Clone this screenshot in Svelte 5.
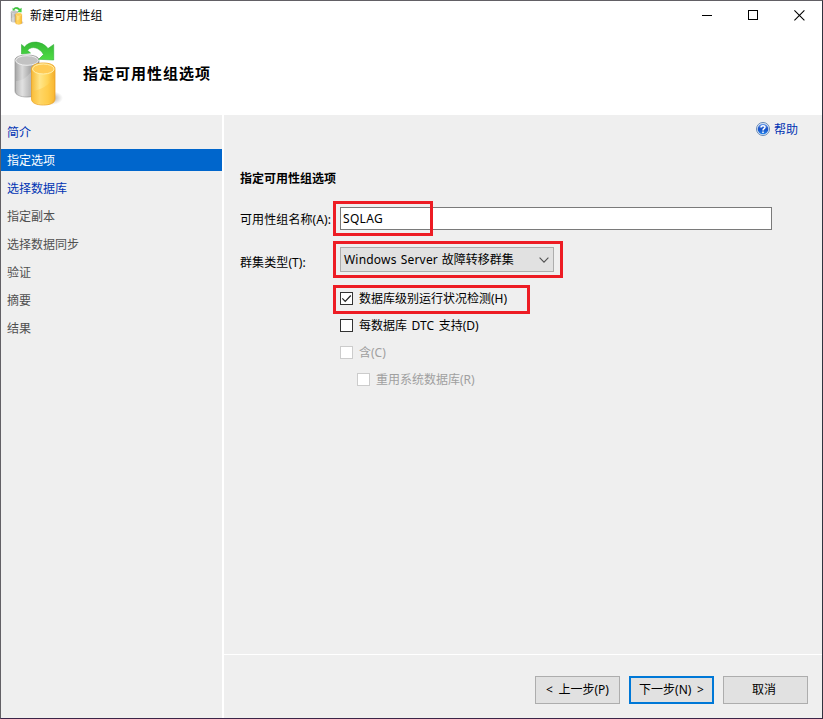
<script lang="ts">
  type Step = { label: string; state: 'link' | 'active' | 'pending' };

  const steps: Step[] = [
    { label: '简介', state: 'link' },
    { label: '指定选项', state: 'active' },
    { label: '选择数据库', state: 'link' },
    { label: '指定副本', state: 'pending' },
    { label: '选择数据同步', state: 'pending' },
    { label: '验证', state: 'pending' },
    { label: '摘要', state: 'pending' },
    { label: '结果', state: 'pending' }
  ];

  let groupName = $state('SQLAG');
  let options = $state([
    { label: '数据库级别运行状况检测(H)', checked: true, disabled: false, nested: false, marked: true },
    { label: '每数据库 DTC 支持(D)', checked: false, disabled: false, nested: false, marked: false },
    { label: '含(C)', checked: false, disabled: true, nested: false, marked: false },
    { label: '重用系统数据库(R)', checked: false, disabled: true, nested: true, marked: false }
  ]);

  function toggle(i: number) {
    if (!options[i].disabled) options[i].checked = !options[i].checked;
  }
</script>

{#snippet databases(size: string)}
  <svg class="db {size}" viewBox="0 0 50 66" aria-hidden="true">
    <defs>
      <linearGradient id="silver-{size}">
        <stop offset="0" stop-color="#a3a3a3" />
        <stop offset="0.3" stop-color="#dadada" />
        <stop offset="0.6" stop-color="#adadad" />
        <stop offset="1" stop-color="#8a8a8a" />
      </linearGradient>
      <linearGradient id="gold-{size}">
        <stop offset="0" stop-color="#f6b935" />
        <stop offset="0.35" stop-color="#ffe68a" />
        <stop offset="0.7" stop-color="#ffd356" />
        <stop offset="1" stop-color="#f2ac2a" />
      </linearGradient>
      <linearGradient id="green-{size}" x2="0" y2="1">
        <stop offset="0" stop-color="#35b936" />
        <stop offset="1" stop-color="#4fdc44" />
      </linearGradient>
      <radialGradient id="shade-{size}">
        <stop offset="0" stop-color="#777" stop-opacity="0.75" />
        <stop offset="1" stop-color="#999" stop-opacity="0" />
      </radialGradient>
    </defs>
    <ellipse cx="37" cy="57" rx="12" ry="7" fill="url(#shade-{size})" />
    <path d="M1 19v31c0 4 6 6 12 6s12-2 12-6V19c0-3-5-5-12-5S1 16 1 19z" fill="url(#silver-{size})" stroke="#969696" stroke-width=".7" />
    <ellipse cx="13" cy="19.500" rx="11.300" ry="4.800" fill="#c2c2c2" stroke="#f0f0f0" />
    <path d="M2 40c6 0 11-4 15-9v24c-8 2-15 0-15-5z" fill="#fff" opacity=".2" />
    <path d="M17.500 28v30c0 4 5 6 11.800 6s11.700-2 11.700-6V28c0-4-5-6-11.700-6s-11.800 2-11.800 6z" fill="url(#gold-{size})" stroke="#eda62a" stroke-width=".8" />
    <ellipse cx="29.300" cy="28" rx="10.800" ry="5" fill="#ffcb55" stroke="#fff0ac" />
    <path d="M18.500 50c9-1 16-6 21.500-13v21c-3 6-18 7-21.500 1z" fill="#ffc33c" opacity=".45" />
    <path d="M7.500 3.500l3 2.500C16-1 28-.5 34 7.500l5.700-4V19l-15-.7 4.800-4.800C26 7 18 4 13.500 9.300l3 2.700-9 1z" fill="url(#green-{size})" stroke="#2fb035" stroke-width=".6" />
  </svg>
{/snippet}

<div class="window" lang="zh-CN">
  <header class="titlebar">
    {@render databases('small')}
    <span class="caption">新建可用性组</span>
    <div class="controls">
      <svg viewBox="0 0 11 11"><path d="M0 5.500h10" /></svg>
      <svg viewBox="0 0 11 11"><path d="M.5 .5h9v9h-9z" /></svg>
      <svg class="close" viewBox="0 0 11 11"><path d="M.4 .4l10 10M10.400 .4l-10 10" /></svg>
    </div>
  </header>

  <div class="banner">
    {@render databases('large')}
    <h1>指定可用性组选项</h1>
  </div>

  <div class="body">
    <nav class="steps">
      {#each steps as step}
        <div class="step {step.state}">{step.label}</div>
      {/each}
    </nav>

    <main class="page">
      <div class="content">
        <div class="help">
          <svg viewBox="0 0 14 14" aria-hidden="true">
            <defs>
              <linearGradient id="help-blue" x2="0" y2="1">
                <stop offset="0" stop-color="#6d9fee" />
                <stop offset=".5" stop-color="#174fc4" />
                <stop offset="1" stop-color="#2685ec" />
              </linearGradient>
            </defs>
            <circle cx="7" cy="7" r="6.500" fill="#e5edf8" stroke="#6487b5" />
            <circle cx="7" cy="7" r="5.300" fill="url(#help-blue)" />
            <path d="M5 5.500C5 3 9.200 3.100 9 5.300 8.900 6.700 7 6.700 7 8.400M7 9.600v1.300" fill="none" stroke="#fff" stroke-width="1.500" />
          </svg>
          <span>帮助</span>
        </div>

        <h2>指定可用性组选项</h2>

        <div class="field name-row">
          <label for="group-name">可用性组名称(A):</label>
          <div class="control marked name-mark">
            <input id="group-name" type="text" spellcheck="false" bind:value={groupName} />
          </div>
        </div>

        <div class="field type-row">
          <span class="label">群集类型(T):</span>
          <div class="control marked type-mark">
            <button class="combo">
              <span><span class="latin">Windows Server</span> 故障转移群集</span>
              <svg viewBox="0 0 10 6"><path d="M.6 .7L5 5.100 9.400 .7" /></svg>
            </button>
          </div>
        </div>

        <div class="options">
          {#each options as option, i}
            <button
              class="option"
              class:nested={option.nested}
              class:marked={option.marked}
              class:option-mark={option.marked}
              disabled={option.disabled}
              role="checkbox"
              aria-checked={option.checked}
              onclick={() => toggle(i)}
            >
              <span class="box">
                {#if option.checked}
                  <svg viewBox="0 0 11 11"><path d="M1.300 5.300l2.900 3L9.800 2.500" /></svg>
                {/if}
              </span>
              <span>{option.label}</span>
            </button>
          {/each}
        </div>
      </div>

      <footer class="footer">
        <button class="btn">&lt; 上一步(P)</button>
        <button class="btn primary">下一步(N) &gt;</button>
        <button class="btn cancel">取消</button>
      </footer>
    </main>
  </div>
</div>

<style>
  :global(body) {
    margin: 0;
    overflow: hidden;
  }
  .window, .window * { box-sizing: border-box; }
  .window {
    width: 823px;
    height: 719px;
    display: flex;
    flex-direction: column;
    border: 1px solid #626065;
    border-right-color: #30323f;
    border-bottom-color: #3b2448;
    background: #fff;
    color: #000;
    font: 12px/16px "Noto Sans", "Noto Sans CJK SC", sans-serif;
  }
  button, input {
    font: inherit;
    color: inherit;
    margin: 0;
  }
  svg { display: block; flex: none; }

  .titlebar {
    height: 29px;
    display: flex;
    align-items: center;
    padding-left: 9px;
  }
  .db.small { width: 15px; height: 18px; }
  .caption { margin-left: 5px; letter-spacing: 0.1px; }
  .controls {
    display: flex;
    gap: 35px;
    margin-left: auto;
    padding-right: 17px;
  }
  .controls svg {
    width: 11px;
    height: 11px;
    fill: none;
    stroke: #000;
    shape-rendering: crispEdges;
  }
  .controls .close { shape-rendering: auto; stroke-width: 1.1; }

  .banner {
    height: 85px;
    display: flex;
    align-items: center;
    padding-left: 13px;
  }
  .db.large { width: 50px; height: 66px; margin-top: 3px; }
  h1 {
    margin: 1px 0 0 19px;
    font-size: 15px;
    line-height: 18px;
    letter-spacing: 1px;
    font-weight: 700;
  }

  .body { flex: 1; display: flex; min-height: 0; }
  .steps {
    width: 221px;
    padding-top: 6px;
    background: #efefef;
  }
  .step {
    height: 22px;
    margin-bottom: 6px;
    padding: 1px 0 0 6px;
    line-height: 22px;
    color: #505050;
  }
  .step.link { color: #0033b3; }
  .step.active { background: #0066cc; color: #fff; }

  .page {
    flex: 1;
    display: flex;
    flex-direction: column;
    margin-left: 2px;
    background: #efefef;
  }
  .content { flex: 1; padding: 6px 24px 0 16px; }
  .help {
    display: flex;
    justify-content: flex-end;
    align-items: center;
    gap: 4px;
    height: 16px;
    color: #0033b3;
  }
  .help svg { width: 14px; height: 14px; }
  .help span { padding-top: 2px; }
  h2 {
    margin: 34px 0 0;
    font-size: 12px;
    line-height: 16px;
    font-weight: 700;
  }
  .field { display: flex; align-items: center; }
  .field label, .field .label {
    width: 100px;
    white-space: nowrap;
    letter-spacing: 0.1px;
  }
  .field label { padding-top: 2px; }
  .field .label { padding-top: 7px; }
  .name-row { margin-top: 20px; height: 23px; }
  .type-row { margin-top: 17px; height: 25px; }
  input {
    display: block;
    width: 432px;
    height: 23px;
    padding: 0 2px;
    border: 1px solid #7a7a7a;
    border-radius: 0;
    background: #fff;
    outline: none;
    letter-spacing: 0.3px;
  }
  .combo {
    width: 214px;
    height: 25px;
    display: flex;
    align-items: center;
    justify-content: space-between;
    padding: 0 4px 0 3px;
    border: 1px solid #adadad;
    background: #e1e1e1;
    word-spacing: 0.7px;
  }
  .latin { letter-spacing: 0.2px; }
  .combo svg {
    width: 10px;
    height: 6px;
    fill: none;
    stroke: #505050;
    stroke-width: 1.1;
  }

  /* red callout frames over the controls */
  .marked { position: relative; }
  .marked::after {
    content: '';
    position: absolute;
    box-sizing: border-box;
    border: 3px solid #ed1c24;
    pointer-events: none;
  }
  .name-mark::after { left: -7px; top: -6px; width: 100px; height: 35px; }
  .type-mark::after { left: -7px; top: -6px; width: 230px; height: 37px; }
  .option-mark::after { left: -7px; top: -5px; width: 197px; height: 29px; }

  .options {
    display: flex;
    flex-direction: column;
    align-items: flex-start;
    gap: 10px;
    margin: 18px 0 0 100px;
  }
  .option {
    height: 17px;
    display: flex;
    align-items: center;
    gap: 6px;
    padding: 0;
    border: none;
    background: none;
    white-space: nowrap;
    word-spacing: 1.5px;
  }
  .option.nested { margin-left: 17px; }
  .option:disabled { color: #a0a0a0; }
  .box {
    width: 13px;
    height: 13px;
    border: 1px solid #333;
    background: #fff;
  }
  .option:disabled .box { border-color: #ccc; }
  .box svg {
    width: 11px;
    height: 11px;
    fill: none;
    stroke: #222;
    stroke-width: 1.2;
  }

  .footer {
    height: 64px;
    display: flex;
    justify-content: flex-end;
    gap: 9px;
    padding: 21px 14px 0 0;
    border-top: 1px solid #fff;
  }
  .btn {
    width: 85px;
    height: 28px;
    padding: 0;
    border: 1px solid #adadad;
    background: #e1e1e1;
    white-space: nowrap;
    word-spacing: 2.5px;
  }
  .btn.primary { border: 2px solid #0078d7; }
  .btn.cancel { padding-right: 3px; }
</style>
